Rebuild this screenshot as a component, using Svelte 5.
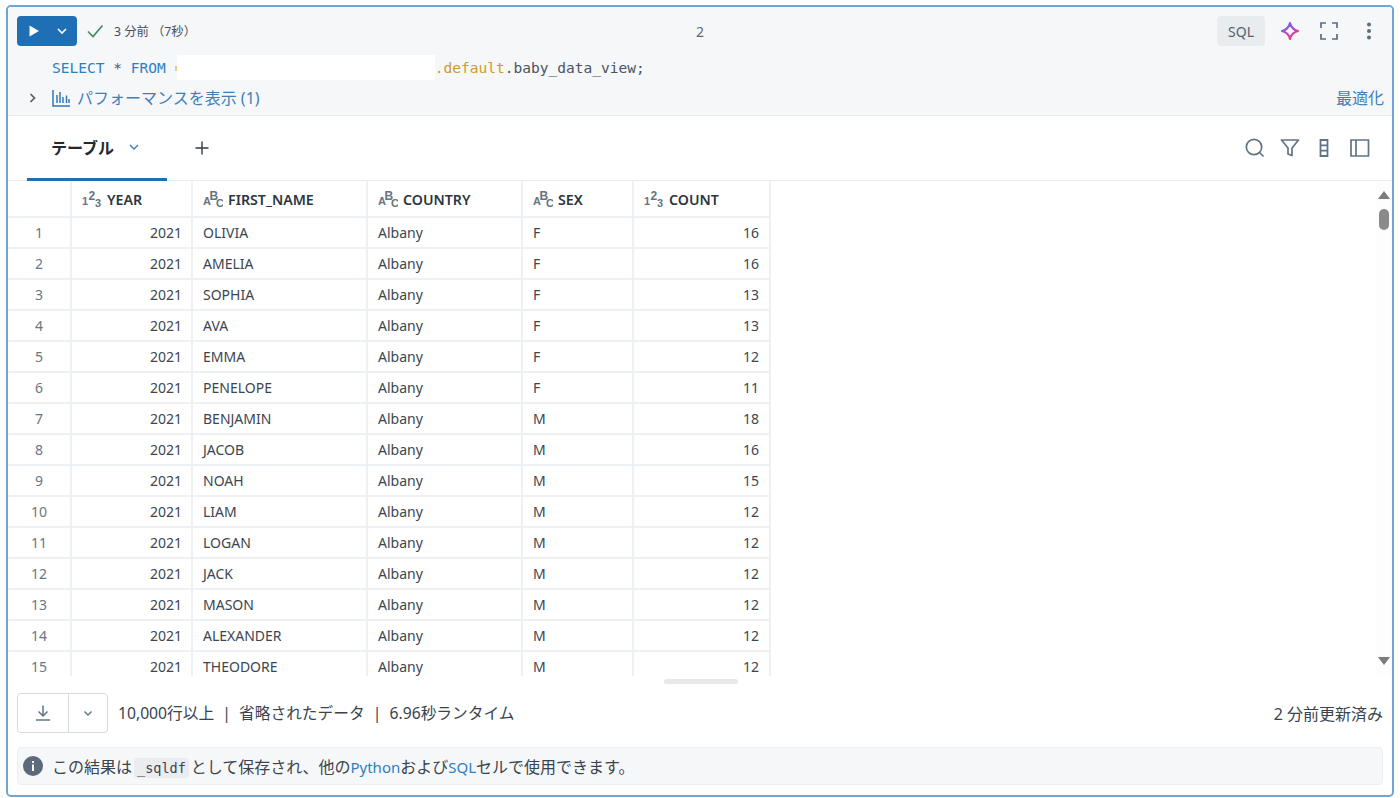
<script>
  const names = [
    ['OLIVIA','F',16],['AMELIA','F',16],['SOPHIA','F',13],['AVA','F',13],['EMMA','F',12],
    ['PENELOPE','F',11],['BENJAMIN','M',18],['JACOB','M',16],['NOAH','M',15],['LIAM','M',12],
    ['LOGAN','M',12],['JACK','M',12],['MASON','M',12],['ALEXANDER','M',12],['THEODORE','M',12]
  ];
  const rows = names.map((n, i) => ({ idx: i + 1, name: n[0], sex: n[1], count: n[2] }));
  const cols = [
    { label: 'YEAR', num: true }, { label: 'FIRST_NAME' }, { label: 'COUNTRY' },
    { label: 'SEX' }, { label: 'COUNT', num: true }
  ];
</script>

<div class="card">
  <header class="head">
    <div class="top">
      <div class="run">
        <svg width="14" height="14" viewBox="0 0 14 14"><path d="M2.5 1.500v11l9.500-5.500z" fill="#fff"/></svg>
        <svg width="12" height="12" viewBox="0 0 12 12"><path d="M2 4l4 4 4-4" fill="none" stroke="#fff" stroke-width="1.600"/></svg>
      </div>
      <svg class="check" width="18" height="16" viewBox="0 0 18 16"><path d="M2 8.500l5 5L16.500 2.500" fill="none" stroke="#3c8a5a" stroke-width="1.600"/></svg>
      <span class="status">3 分前 （7秒）</span>
      <span class="cellno">2</span>
      <div class="tools">
        <span class="sql">SQL</span>
        <svg class="star" width="20" height="20" viewBox="0 0 20 20"><defs><linearGradient id="ai" x1="0" y1="0" x2="0.6" y2="1"><stop offset="0" stop-color="#4a78f0"/><stop offset=".5" stop-color="#a84ce0"/><stop offset="1" stop-color="#f83a6c"/></linearGradient></defs><path d="M10 2c1.100 4.600 3.200 6.900 8 8-4.800 1.100-6.900 3.400-8 8-1.100-4.600-3.200-6.900-8-8 4.800-1.100 6.900-3.400 8-8z" fill="none" stroke="url(#ai)" stroke-width="2.200" stroke-linejoin="round"/></svg>
        <svg width="20" height="20" viewBox="0 0 20 20"><path d="M2 7V2h5M13 2h5v5M18 13v5h-5M7 18H2v-5" fill="none" stroke="#5a6f80" stroke-width="1.700"/></svg>
        <svg class="dots" width="16" height="20" viewBox="0 0 16 20"><g fill="#5a6f80"><circle cx="8" cy="3.500" r="2"/><circle cx="8" cy="10" r="2"/><circle cx="8" cy="16.500" r="2"/></g></svg>
      </div>
    </div>
    <div class="code"><span class="kw">SELECT</span> * <span class="kw">FROM</span> <span class="sliver"></span><span class="mask"></span><span class="org">.default</span>.baby_data_view;</div>
    <div class="perf">
      <svg class="caret" width="10" height="12" viewBox="0 0 10 12"><path d="M2.500 2l4 4-4 4" fill="none" stroke="#56606a" stroke-width="1.700"/></svg>
      <svg class="bars" width="18" height="18" viewBox="0 0 18 18"><path d="M1 1v16h17M5 6v8M8 3v11M11 8v6M14.500 6.500V14M17 10v4" fill="none" stroke="#2f78b8" stroke-width="1.500"/></svg>
      <span class="perf-label">パフォーマンスを表示 (1)</span>
      <span class="opt">最適化</span>
    </div>
  </header>

  <nav class="tabs">
    <div class="tab"><span>テーブル</span>
      <svg width="12" height="12" viewBox="0 0 12 12"><path d="M2 4l4 4 4-4" fill="none" stroke="#3f7cb5" stroke-width="1.400"/></svg>
    </div>
    <svg class="plus" width="16" height="16" viewBox="0 0 16 16"><path d="M8 1.500v13M1.500 8h13" stroke="#303a42" stroke-width="1.400"/></svg>
    <div class="tabtools">
      <svg width="22" height="22" viewBox="0 0 22 22"><circle cx="10" cy="10" r="7.700" fill="none" stroke="#5f7484" stroke-width="1.700"/><path d="M15.500 15.500l4 4" stroke="#5f7484" stroke-width="1.700"/></svg>
      <svg width="20" height="20" viewBox="0 0 20 20"><path d="M1.500 2h17l-6.500 8v7.500l-4-1.500v-6z" fill="none" stroke="#5f7484" stroke-width="1.700" stroke-linejoin="round"/></svg>
      <svg width="10" height="18" viewBox="0 0 10 18"><path d="M1.500 1h7v16h-7zM1.500 6.300h7M1.500 11.700h7" fill="none" stroke="#5f7484" stroke-width="1.800"/></svg>
      <svg width="20" height="18" viewBox="0 0 20 18"><path d="M1 1h17.500v16H1zM6 1v16" fill="none" stroke="#5f7484" stroke-width="1.700"/></svg>
    </div>
  </nav>

  <section class="grid-wrap">
    <div class="grid">
      <div class="hc"></div>
      {#each cols as c}
        <div class="hc">
          {#if c.num}
            <svg class="ty" width="20" height="18" viewBox="0 0 20 18"><g fill="#66747f" font-family="Liberation Sans, sans-serif" font-weight="700"><text x="0" y="14.500" font-size="11">1</text><text x="6.500" y="9.500" font-size="12">2</text><text x="13" y="17" font-size="11">3</text></g></svg>
          {:else}
            <svg class="ty" width="20" height="18" viewBox="0 0 20 18"><g fill="#66747f" font-family="Liberation Sans, sans-serif" font-weight="700"><text x="0" y="15" font-size="11">A</text><text x="6.500" y="9.500" font-size="12">B</text><text x="13" y="17" font-size="11">C</text></g></svg>
          {/if}
          <span>{c.label}</span>
        </div>
      {/each}
      {#each rows as r}
        <div class="c idx">{r.idx}</div>
        <div class="c r">2021</div>
        <div class="c">{r.name}</div>
        <div class="c">Albany</div>
        <div class="c">{r.sex}</div>
        <div class="c r last">{r.count}</div>
      {/each}
    </div>
    <div class="vbar">
      <i class="up"></i><b></b><i class="down"></i>
    </div>
  </section>

  <div class="foot">
    <div class="dl">
      <span class="dl-a"><svg width="18" height="18" viewBox="0 0 18 18"><path d="M9 1.500v10M4.500 7.500L9 12l4.500-4.500M2 16h14" fill="none" stroke="#5f7484" stroke-width="1.500"/></svg></span>
      <span class="dl-b"><svg width="12" height="12" viewBox="0 0 12 12"><path d="M2.500 4.500L6 8l3.500-3.500" fill="none" stroke="#5f7484" stroke-width="1.400"/></svg></span>
    </div>
    <span class="meta">10,000行以上 &nbsp;|&nbsp; 省略されたデータ &nbsp;|&nbsp; 6.96秒ランタイム</span>
    <span class="upd">2 分前更新済み</span>
  </div>

  <div class="note">
    <svg width="20" height="20" viewBox="0 0 20 20"><circle cx="10" cy="10" r="10" fill="#5b6b7a"/><rect x="9" y="8.500" width="2" height="6.500" fill="#fff"/><rect x="9" y="5" width="2" height="2" fill="#fff"/></svg>
    <span>この結果は<code>_sqldf</code>として保存され、他の<a href="#p">Python</a>および<a href="#s">SQL</a>セルで使用できます。</span>
  </div>
</div>

<style>
  :global(body) { margin: 0; background: #fff; }
  .card {
    box-sizing: border-box; width: 1388px; height: 792px; margin: 5px 6px 0;
    border: 2px solid #6fa5d3; border-radius: 5px; overflow: hidden;
    display: flex; flex-direction: column; background: #fff;
    font-family: "Noto Sans", "Noto Sans CJK JP", sans-serif; color: #2b3640; font-size: 14px;
  }
  .head { height: 109px; flex: none; box-sizing: border-box; background: #f6f7f9; border-bottom: 1px solid #e8ebef; padding: 9px 10px 0 9px; }
  .top { display: flex; align-items: center; height: 30px; position: relative; }
  .run { width: 60px; height: 30px; box-sizing: border-box; background: #1f6fb5; border-radius: 4px; display: flex; align-items: center; justify-content: space-between; padding: 0 9px 0 10px; }
  .check { margin-left: 9px; }
  .status { margin-left: 10px; font-size: 12.300px; color: #46505a; }
  .cellno { position: absolute; left: 679px; font-size: 14px; color: #5c6670; }
  .tools { margin-left: auto; display: flex; align-items: center; gap: 19px; margin-right: 5px; }
  .sql { background: #e9ecef; border-radius: 4px; height: 30px; width: 48px; display: flex; align-items: center; justify-content: center; font-size: 14px; color: #56626c; margin-right: -4px; }
  .dots { margin-left: 3px; }
  .code { margin: 9px 0 0 35px; height: 25px; line-height: 26px; font-family: "DejaVu Sans Mono", monospace; font-size: 14.560px; color: #4a5560; white-space: pre; }
  .kw { color: #2f7fc0; }
  .org { color: #d09a28; }
  .sliver { display: inline-block; width: 2px; height: 5px; background: #eccb85; vertical-align: top; margin-top: 11px; }
  .mask { display: inline-block; width: 258px; height: 25px; background: #fff; vertical-align: top; }
  .perf { display: flex; align-items: center; margin-top: 4px; height: 26px; }
  .caret { margin-left: 11px; margin-top: 2px; }
  .bars { margin-left: 14px; margin-top: 2px; }
  .perf-label { margin-left: 7px; color: #3f7fb8; font-size: 16px; }
  .opt { margin-left: auto; color: #3f7fb8; font-size: 16px; margin-right: -2px; }
  .tabs { height: 64px; flex: none; display: flex; align-items: center; border-bottom: 1px solid #e8ebef; box-sizing: content-box; }
  .tab { align-self: stretch; box-sizing: border-box; margin-left: 19px; width: 140px; border-bottom: 3px solid #1f6fb5; display: flex; align-items: center; padding-left: 24px; gap: 14px; font-weight: 700; font-size: 16px; color: #222a30; margin-bottom: -1px; height: 65px; }
  .plus { margin-left: 27px; }
  .tabtools { margin-left: auto; display: flex; align-items: center; gap: 14px; margin-right: 22px; }
  .tabtools svg:nth-child(3) { margin: 0 7px 0 5px; }
  .grid-wrap { height: 495px; flex: none; overflow: hidden; position: relative; }
  .grid { display: grid; grid-template-columns: 64px 121px 175px 155px 111px 137px; grid-template-rows: 37px; grid-auto-rows: 31px; width: 763px; }
  .hc { height: 37px; box-sizing: border-box; border-right: 2px solid #eef1f4; border-bottom: 2px solid #eef1f4; display: flex; align-items: center; padding: 1px 0 0 10px; font-weight: 600; font-size: 14.200px; color: #2b3640; gap: 5px; white-space: nowrap; }
  .c { box-sizing: border-box; border-right: 2px solid #eef1f4; border-bottom: 2px solid #eef1f4; padding: 0 9px 0 10px; line-height: 29px; font-size: 14px; color: #3c4650; white-space: nowrap; }
  .r { text-align: right; }
  .last { padding-right: 10px; }
  .idx { color: #6c7680; padding: 0; text-align: center; }
  .vbar { position: absolute; right: -1px; top: 0; width: 17px; height: 495px; background: #fdfdfd; }
  .vbar b { position: absolute; left: 3px; top: 28px; width: 10px; height: 21px; background: #8a8a8a; border-radius: 5px; }
  .vbar i { position: absolute; left: 2px; width: 0; height: 0; border-left: 6px solid transparent; border-right: 6px solid transparent; }
  .up { top: 10px; border-bottom: 8px solid #7b7b7b; }
  .down { top: 476px; border-top: 8px solid #7b7b7b; }
  .foot { height: 71px; flex: none; display: flex; align-items: center; padding: 2px 9px 0; box-sizing: border-box; position: relative; }
  .foot::before { content: ""; position: absolute; left: 656px; top: 3px; width: 74px; height: 5px; background: #e6e8ea; border-radius: 3px; }
  .dl { display: flex; box-sizing: border-box; height: 40px; width: 91px; border: 1.500px solid #d5dbe1; border-radius: 4px; }
  .dl-a { width: 50px; display: flex; align-items: center; justify-content: center; border-right: 1.500px solid #d5dbe1; }
  .dl-b { flex: 1; display: flex; align-items: center; justify-content: center; }
  .meta { margin-left: 10px; font-size: 15.700px; color: #3a444e; }
  .upd { margin-left: auto; font-size: 16px; color: #3a444e; }
  .note { flex: none; height: 38px; margin: 0 9px; box-sizing: border-box; background: #f6f7f9; border: 1px solid #eceff2; border-radius: 4px; display: flex; align-items: center; padding-left: 5px; gap: 9px; font-size: 16px; color: #3a444e; }
  .note a { color: #2f7fc0; text-decoration: none; font-size: 15px; }
  code { font-family: "DejaVu Sans Mono", monospace; font-size: 13.500px; background: #eaecef; border-radius: 3px; padding: 2px 3px; margin: 0 2px; }
</style>
